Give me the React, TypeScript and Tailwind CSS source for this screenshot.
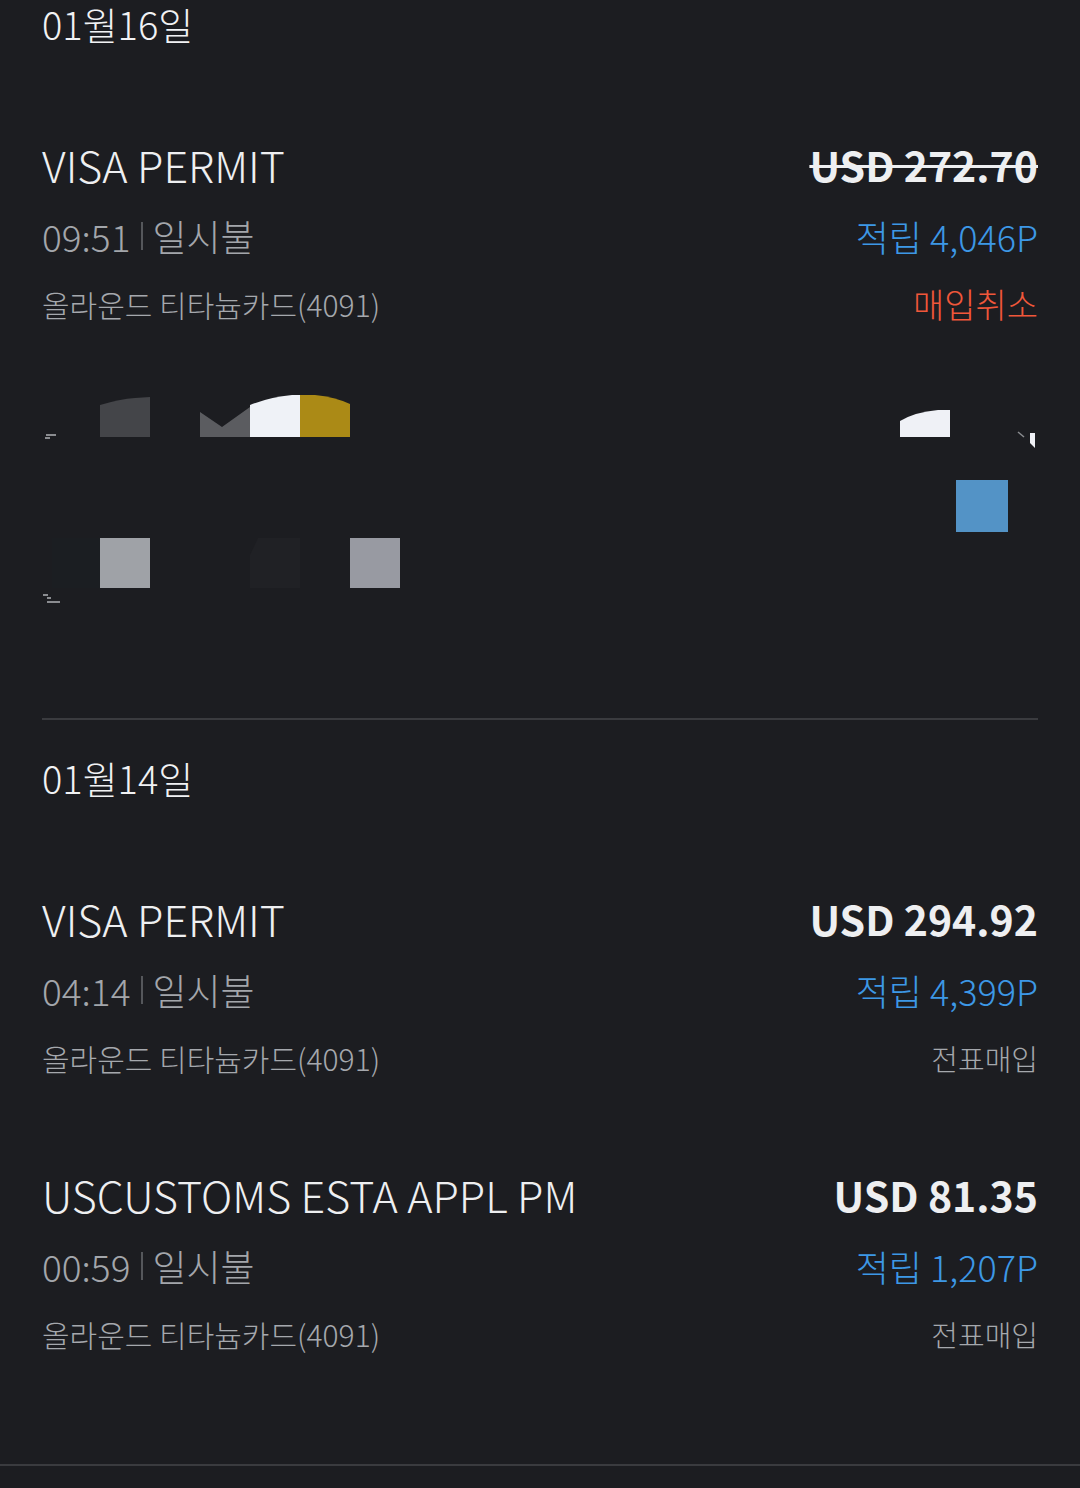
import React from "react";

type Tx = {
  title: string;
  amount: string;
  cancelled?: boolean;
  time: string;
  point: string;
  status: string;
  statusTone: "red" | "gray";
};

const font = { fontFamily: '"Noto Sans CJK KR", "Noto Sans", sans-serif' };

const TxRow = ({ tx }: { tx: Tx }) => (
  <div className="flex flex-col">
    <div className="flex h-[72px] items-center justify-between">
      <span className="text-[43px] font-light leading-[72px] text-[#eeeff1]">{tx.title}</span>
      <span
        className={`text-[41px] font-bold leading-[72px] text-[#eeeff1] ${
          tx.cancelled ? "line-through decoration-[3px]" : ""
        }`}
      >
        {tx.amount}
      </span>
    </div>
    <div className="flex h-[72px] items-center justify-between">
      <div className="flex items-center text-[37px] font-light leading-[72px] text-[#a3a6ab]">
        <span>{tx.time}</span>
        <span className="ml-[11px] mr-[9px] h-[28px] w-[2px] bg-[#55575b]" />
        <span>일시불</span>
      </div>
      <span className="text-[36px] font-light leading-[72px] text-[#3d98e6]">적립 {tx.point}</span>
    </div>
    <div className="flex h-[64px] items-center justify-between">
      <span className="text-[30px] font-light leading-[64px] text-[#a5a8ad]">올라운드 티타늄카드(4091)</span>
      <span
        className={`font-light ${
          tx.statusTone === "red"
            ? "text-[34px] leading-[64px] text-[#f0573a]"
            : "text-[29px] leading-[64px] text-[#a5a8ad]"
        }`}
      >
        {tx.status}
      </span>
    </div>
  </div>
);

const Mosaic = () => (
  <svg width="996" height="230" viewBox="42 380 996 230" className="block">
    <path d="M100 405 Q120 399 135 398 L150 397 L150 437 L100 437 Z" fill="#444549" />
    <path d="M200 412 L222 427 L250 407 L250 437 L200 437 Z" fill="#5b5c60" />
    <path d="M250 405 Q270 397 292 395 L300 395 L300 437 L250 437 Z" fill="#eff2f7" />
    <path d="M300 395 L315 395 Q335 397 350 404 L350 437 L300 437 Z" fill="#ab8a16" />
    <path d="M900 421 Q915 412 938 410 L950 410 L950 437 L900 437 Z" fill="#eff1f6" />
    <path d="M1030 433 L1035 433 L1035 448 L1030 443 Z" fill="#eff1f6" />
    <path d="M1018 432 L1024 437" stroke="#8a8c90" strokeWidth="1.5" />
    <path d="M46 435 L56 435 M45 438 L50 438" stroke="#8a8c90" strokeWidth="2" />
    <rect x="956" y="480" width="52" height="52" fill="#5393c6" />
    <rect x="52" y="538" width="48" height="50" fill="#1b1e22" />
    <rect x="100" y="538" width="50" height="50" fill="#9fa2a7" />
    <path d="M258 538 L300 538 L300 588 L250 588 L250 555 Z" fill="#202125" />
    <rect x="350" y="538" width="50" height="50" fill="#989aa2" />
    <path d="M43 595 L48 595 M47 598 L51 598 M47 602 L60 602" stroke="#8a8c90" strokeWidth="2" />
  </svg>
);

const DateHeader = ({ label }: { label: string }) => (
  <div className="h-[48px] text-[38px] font-light leading-[48px] text-[#f1f2f4]">{label}</div>
);

export default function App() {
  const first: Tx = {
    title: "VISA PERMIT",
    amount: "USD 272.70",
    cancelled: true,
    time: "09:51",
    point: "4,046P",
    status: "매입취소",
    statusTone: "red",
  };
  const second: Tx[] = [
    {
      title: "VISA PERMIT",
      amount: "USD 294.92",
      time: "04:14",
      point: "4,399P",
      status: "전표매입",
      statusTone: "gray",
    },
    {
      title: "USCUSTOMS ESTA APPL PM",
      amount: "USD 81.35",
      time: "00:59",
      point: "1,207P",
      status: "전표매입",
      statusTone: "gray",
    },
  ];

  return (
    <div className="h-[1488px] w-[1080px] overflow-hidden bg-[#1c1d21]" style={font}>
      <div className="px-[42px]">
        <DateHeader label="01월16일" />
        <div className="mt-[80px]">
          <TxRow tx={first} />
        </div>
        <div className="mt-[44px]">
          <Mosaic />
        </div>
        <div className="mt-[108px] h-[2px] bg-[#3a3b3f]" />
        <div className="mt-[34px]">
          <DateHeader label="01월14일" />
        </div>
        <div className="mt-[80px] flex flex-col gap-[68px]">
          {second.map((tx, i) => (
            <TxRow tx={tx} key={i} />
          ))}
        </div>
      </div>
      <div className="mt-[98px] h-[2px] bg-[#3a3b3f]" />
    </div>
  );
}
